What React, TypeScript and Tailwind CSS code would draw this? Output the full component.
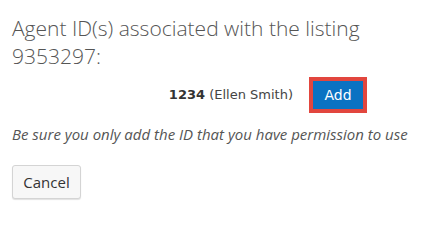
import React from "react";

const AgentIdDialog: React.FC = () => {
  return (
    <div className="w-[443px] h-[215px] bg-white pl-3 pr-3 pt-[14px] font-['Open_Sans',sans-serif]">
      <h2 className="text-[21px] leading-[28px] font-light text-[#555]">
        Agent ID(s) associated with the listing 9353297:
      </h2>

      {/* agent row */}
      <div className="flex items-center justify-end pr-[68px] mt-[11px] font-['DejaVu_Sans',sans-serif]">
        <span className="text-[13px] text-[#444]">
          <b className="text-[#333]">1234</b> (Ellen Smith)
        </span>
        <button
          type="button"
          className="ml-5 h-[28px] w-[50px] bg-[#0a72c2] text-white text-[14px] outline-4 outline-[#e2463e]"
        >
          Add
        </button>
      </div>

      <p className="mt-[15px] text-[15px] leading-5 italic text-[#555]">
        Be sure you only add the ID that you have permission to use
      </p>

      <button
        type="button"
        className="mt-[21px] h-[34px] w-[69px] rounded-[3px] border border-[#d4d4d4] bg-[#f7f7f7] text-[15px] text-[#333] shadow-[0_1px_1px_rgba(0,0,0,0.12)]"
      >
        Cancel
      </button>
    </div>
  );
};

export default function App() {
  return <AgentIdDialog />;
}
